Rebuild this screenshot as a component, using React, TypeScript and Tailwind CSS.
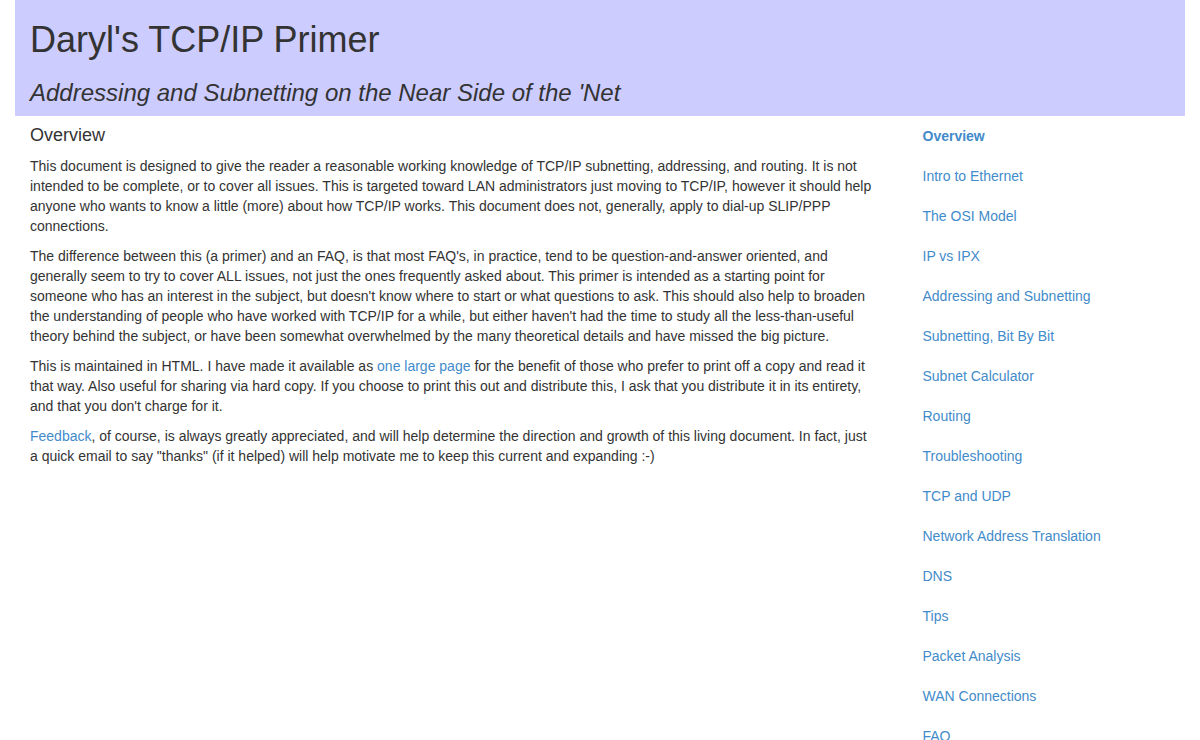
import React from "react";

const links = [
  "Overview",
  "Intro to Ethernet",
  "The OSI Model",
  "IP vs IPX",
  "Addressing and Subnetting",
  "Subnetting, Bit By Bit",
  "Subnet Calculator",
  "Routing",
  "Troubleshooting",
  "TCP and UDP",
  "Network Address Translation",
  "DNS",
  "Tips",
  "Packet Analysis",
  "WAN Connections",
  "FAQ",
  "Glossary",
  "Resources",
];

export default function App() {
  return (
    <div className="min-h-screen bg-white font-['Liberation_Sans',Arial,sans-serif] text-[14px] leading-[20px] text-[#333]">
      <div className="mx-auto w-[1170px]">
        <header className="bg-[#ccccff] px-[15px] pt-[20px] pb-[10px]">
          <h1 className="text-[36px] leading-[39.6px] font-medium">
            Daryl's TCP/IP Primer
          </h1>
          <h3 className="mt-[20px] text-[24px] leading-[26.4px] font-medium italic">
            Addressing and Subnetting on the Near Side of the 'Net
          </h3>
        </header>

        <div className="flex">
          <main className="w-[877.5px] px-[15px]">
            <h4 className="mt-[10px] mb-[10px] text-[18px] leading-[19.8px] font-medium">
              Overview
            </h4>
            <p className="mb-[10px]">
              This document is designed to give the reader a reasonable working
              knowledge of TCP/IP subnetting, addressing, and routing. It is not
              intended to be complete, or to cover all issues. This is targeted
              toward LAN administrators just moving to TCP/IP, however it should
              help anyone who wants to know a little (more) about how TCP/IP
              works. This document does not, generally, apply to dial-up
              SLIP/PPP connections.
            </p>
            <p className="mb-[10px]">
              The difference between this (a primer) and an FAQ, is that most
              FAQ's, in practice, tend to be question-and-answer oriented, and
              generally seem to try to cover ALL issues, not just the ones
              frequently asked about. This primer is intended as a starting point
              for someone who has an interest in the subject, but doesn't know
              where to start or what questions to ask. This should also help to
              broaden the understanding of people who have worked with TCP/IP for
              a while, but either haven't had the time to study all the
              less-than-useful theory behind the subject, or have been somewhat
              overwhelmed by the many theoretical details and have missed the big
              picture.
            </p>
            <p className="mb-[10px]">
              This is maintained in HTML. I have made it available as{" "}
              <a href="#" className="text-[#428bca]">
                one large page
              </a>{" "}
              for the benefit of those who prefer to print off a copy and read it
              that way. Also useful for sharing via hard copy. If you choose to
              print this out and distribute this, I ask that you distribute it in
              its entirety, and that you don't charge for it.
            </p>
            <p className="mb-[10px]">
              <a href="#" className="text-[#428bca]">
                Feedback
              </a>
              , of course, is always greatly appreciated, and will help determine
              the direction and growth of this living document. In fact, just a
              quick email to say "thanks" (if it helped) will help motivate me to
              keep this current and expanding :-)
            </p>
          </main>

          <aside className="w-[292.5px] px-[15px]">
            <ul>
              {links.map((l, i) => (
                <li key={l}>
                  <a
                    href="#"
                    className={
                      "block px-[15px] py-[10px] text-[#428bca]" +
                      (i === 0 ? " font-bold" : "")
                    }
                  >
                    {l}
                  </a>
                </li>
              ))}
            </ul>
          </aside>
        </div>
      </div>
    </div>
  );
}
